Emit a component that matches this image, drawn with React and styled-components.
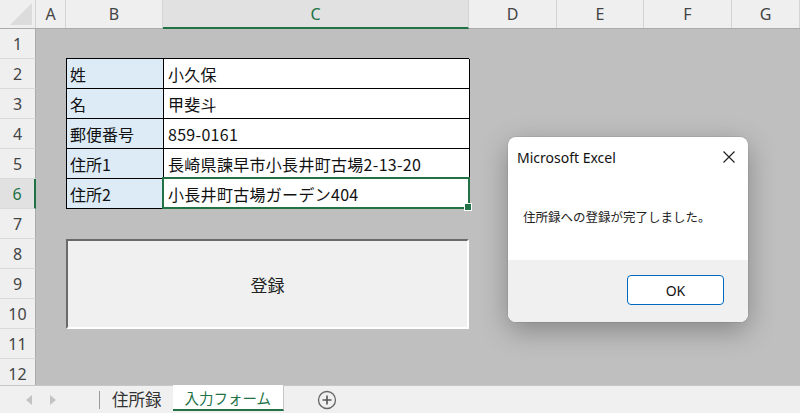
import React from "react"
import styled, { createGlobalStyle } from "styled-components"

const GlobalStyle = createGlobalStyle`
  html, body {
    margin: 0;
    padding: 0;
    width: 800px;
    height: 413px;
    overflow: hidden;
    background: #bfbfbf;
    font-family: "Noto Sans", "Noto Sans CJK JP", sans-serif;
  }
`

const COLS = [
  { name: "A", width: 30 },
  { name: "B", width: 97 },
  { name: "C", width: 306 },
  { name: "D", width: 88 },
  { name: "E", width: 87 },
  { name: "F", width: 88 },
  { name: "G", width: 68 },
]

const ROWS = [1, 2, 3, 4, 5, 6, 7, 8, 9, 10, 11, 12]

const Window = styled.div`
  position: relative;
  width: 800px;
  height: 413px;
  display: flex;
  flex-direction: column;
`

const HeaderRow = styled.div`
  display: flex;
  height: 29px;
  flex-shrink: 0;
  background: #efefef;
  border-bottom: 1px solid #ababab;
  box-sizing: border-box;
`

const Corner = styled.div`
  width: 36px;
  flex-shrink: 0;
  position: relative;
  border-right: 1px solid #d4d4d4;
  box-sizing: border-box;
  &::after {
    content: "";
    position: absolute;
    right: 3px;
    bottom: 3px;
    border-style: solid;
    border-width: 0 0 22px 22px;
    border-color: transparent transparent #dcdcdc transparent;
  }
`

const ColHead = styled.div`
  width: ${(p) => p.$w}px;
  flex-shrink: 0;
  display: flex;
  align-items: center;
  justify-content: center;
  font-size: 16px;
  color: ${(p) => (p.$active ? "#217346" : "#444")};
  background: ${(p) => (p.$active ? "#e1e1e1" : "transparent")};
  border-right: 1px solid #d4d4d4;
  border-bottom: ${(p) => (p.$active ? "2px solid #217346" : "none")};
  margin-bottom: ${(p) => (p.$active ? "-1px" : "0")};
  box-sizing: border-box;
`

const Body = styled.div`
  flex: 1;
  display: flex;
  min-height: 0;
  overflow: hidden;
`

const RowHeads = styled.div`
  width: 36px;
  flex-shrink: 0;
  display: flex;
  flex-direction: column;
  background: #efefef;
`

const RowHead = styled.div`
  height: 30px;
  flex-shrink: 0;
  display: flex;
  align-items: center;
  justify-content: center;
  font-size: 16px;
  color: ${(p) => (p.$active ? "#217346" : "#444")};
  background: ${(p) => (p.$active ? "#e1e1e1" : "#efefef")};
  border-bottom: 1px solid #d9d9d9;
  border-right: ${(p) => (p.$active ? "2px solid #217346" : "1px solid #ababab")};
  box-sizing: border-box;
`

const Sheet = styled.div`
  flex: 1;
  display: grid;
  grid-template-columns: 30px 97px 306px 88px 87px 88px 1fr;
  grid-template-rows: repeat(12, 30px);
  background: #bfbfbf;
`

const FormTable = styled.div`
  grid-column: 2 / 4;
  grid-row: 2 / 7;
  display: grid;
  grid-template-columns: 97px 306px;
  grid-template-rows: repeat(5, 30px);
  margin-top: -1px;
  border-top: 1px solid #000;
  border-left: 1px solid #000;
  box-sizing: border-box;
`

const Cell = styled.div`
  position: relative;
  display: flex;
  align-items: center;
  padding-left: ${(p) => (p.$label ? "3px" : "4px")};
  background: ${(p) => (p.$label ? "#ddebf7" : "#fff")};
  border-right: 1px solid #000;
  border-bottom: 1px solid #000;
  box-sizing: border-box;
  font-family: "Noto Sans CJK JP", sans-serif;
  font-size: 16px;
  letter-spacing: ${(p) => (p.$label ? "0" : "0.3px")};
  color: #111;
  white-space: nowrap;
`

const Selection = styled.div`
  position: absolute;
  left: -2px;
  top: -2px;
  right: -1px;
  bottom: -1px;
  border: 2px solid #217346;
  pointer-events: none;
  &::after {
    content: "";
    position: absolute;
    right: -4px;
    bottom: -4px;
    width: 6px;
    height: 6px;
    background: #217346;
    border: 1px solid #fff;
  }
`

const RegisterButton = styled.div`
  grid-column: 2 / 4;
  grid-row: 8 / 11;
  display: flex;
  align-items: center;
  justify-content: center;
  background: #f0f0f0;
  border-top: 2px solid #6a6a6a;
  border-left: 2px solid #6a6a6a;
  border-bottom: 2px solid #fff;
  border-right: 2px solid #fff;
  box-sizing: border-box;
  font-family: "Noto Sans CJK JP", sans-serif;
  font-size: 17px;
  color: #222;
`

const TabBar = styled.div`
  height: 28px;
  flex-shrink: 0;
  display: flex;
  align-items: stretch;
  background: #f0f0f0;
  border-top: 1px solid #c6c6c6;
  box-sizing: border-box;
`

const NavArrows = styled.div`
  width: 100px;
  display: flex;
  align-items: center;
  padding-left: 26px;
  gap: 18px;
  box-sizing: border-box;
  border-right: 1px solid #999;
  margin: 5px 0 4px;
`

const Tab = styled.div`
  display: flex;
  align-items: center;
  padding: 0 ${(p) => (p.$active ? "12px" : "11px")};
  margin-left: ${(p) => (p.$first ? "1px" : "0")};
  font-family: "Noto Sans CJK JP", sans-serif;
  font-size: ${(p) => (p.$active ? "14.5px" : "16.5px")};
  color: ${(p) => (p.$active ? "#217346" : "#333")};
  background: ${(p) => (p.$active ? "#fff" : "transparent")};
  border-bottom: ${(p) => (p.$active ? "2px solid #217346" : "none")};
  border-right: ${(p) => (p.$active ? "1px solid #c6c6c6" : "none")};
  margin-bottom: ${(p) => (p.$active ? "2px" : "0")};
  margin-top: -1px;
`

const AddSheet = styled.div`
  display: flex;
  align-items: center;
  margin-left: 33px;
`

const Dialog = styled.div`
  position: absolute;
  left: 508px;
  top: 137px;
  width: 240px;
  height: 185px;
  border-radius: 8px;
  overflow: hidden;
  background: #fff;
  box-shadow: 0 8px 28px rgba(0, 0, 0, 0.3), 0 0 0 1px rgba(0, 0, 0, 0.06);
  display: flex;
  flex-direction: column;
`

const DialogTitle = styled.div`
  height: 40px;
  display: flex;
  align-items: center;
  justify-content: space-between;
  padding: 0 13px 0 9px;
  font-family: "Noto Sans", sans-serif;
  font-size: 14px;
  color: #111;
`

const Message = styled.div`
  flex: 1;
  display: flex;
  align-items: center;
  padding: 0 0 4px 15px;
  font-family: "Noto Sans CJK JP", sans-serif;
  font-size: 12.5px;
  color: #222;
`

const DialogFooter = styled.div`
  height: 62px;
  background: #f0f0f0;
  display: flex;
  align-items: center;
  justify-content: flex-end;
  padding: 0 24px 0 0;
`

const OkButton = styled.div`
  width: 97px;
  height: 30px;
  box-sizing: border-box;
  border: 1px solid #0067c0;
  border-radius: 4px;
  background: #fff;
  display: flex;
  align-items: center;
  justify-content: center;
  font-family: "Noto Sans", sans-serif;
  font-size: 14px;
  color: #111;
  margin-top: -2px;
`

const rows = [
  ["姓", "小久保"],
  ["名", "甲斐斗"],
  ["郵便番号", "859-0161"],
  ["住所1", "長崎県諫早市小長井町古場2-13-20"],
  ["住所2", "小長井町古場ガーデン404"],
]

const Arrow = ({ dir }) => (
  <svg width="6" height="10" viewBox="0 0 6 10">
    <path d={dir === "left" ? "M6 0 L0 5 L6 10 Z" : "M0 0 L6 5 L0 10 Z"} fill="#c3c3c3" />
  </svg>
)

const App = () => {
  return (
    <>
      <GlobalStyle />
      <Window>
        <HeaderRow>
          <Corner />
          {COLS.map((c) => (
            <ColHead key={c.name} $w={c.width} $active={c.name === "C"}>
              {c.name}
            </ColHead>
          ))}
        </HeaderRow>
        <Body>
          <RowHeads>
            {ROWS.map((r) => (
              <RowHead key={r} $active={r === 6}>
                {r}
              </RowHead>
            ))}
          </RowHeads>
          <Sheet>
            <FormTable>
              {rows.map(([label, value], i) => (
                <React.Fragment key={label}>
                  <Cell $label>{label}</Cell>
                  <Cell>
                    {value}
                    {i === 4 && <Selection />}
                  </Cell>
                </React.Fragment>
              ))}
            </FormTable>
            <RegisterButton>登録</RegisterButton>
          </Sheet>
        </Body>
        <TabBar>
          <NavArrows>
            <Arrow dir="left" />
            <Arrow dir="right" />
          </NavArrows>
          <Tab $first>住所録</Tab>
          <Tab $active>入力フォーム</Tab>
          <AddSheet>
            <svg width="20" height="20" viewBox="0 0 20 20">
              <circle cx="10" cy="10" r="8.5" fill="none" stroke="#666" strokeWidth="1.3" />
              <path d="M10 5.5 V14.5 M5.5 10 H14.5" stroke="#555" strokeWidth="1.6" />
            </svg>
          </AddSheet>
        </TabBar>
        <Dialog>
          <DialogTitle>
            <span>Microsoft Excel</span>
            <svg width="12" height="12" viewBox="0 0 12 12">
              <path d="M0.5 0.5 L11.5 11.5 M11.5 0.5 L0.5 11.5" stroke="#222" strokeWidth="1.2" />
            </svg>
          </DialogTitle>
          <Message>住所録への登録が完了しました。</Message>
          <DialogFooter>
            <OkButton>OK</OkButton>
          </DialogFooter>
        </Dialog>
      </Window>
    </>
  )
}

export default App
